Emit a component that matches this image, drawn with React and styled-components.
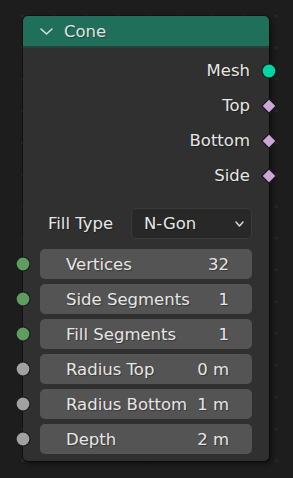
import React from "react";
import styled, { createGlobalStyle } from "styled-components";

//-----------------------------------------------------------------------------------------------

const GlobalStyle = createGlobalStyle`
	html, body {
		margin: 0;
		padding: 0;
		width: 293px;
		height: 478px;
		overflow: hidden;
	}
	body {
		background-color: #1d1d1d;
		background-image: radial-gradient(circle, #2d2d2d 1px, transparent 1.6px);
		background-size: 31.75px 31.75px;
		background-position: 260.6px 0.1px;
		font-family: "DejaVu Sans", "Liberation Sans", sans-serif;
	}
`;

const Canvas = styled.div`
	padding: 16px 0 0 23px;
`;

const Node = styled.div`
	position: relative;
	width: 246px;
	height: 445px;
	box-sizing: border-box;
	background: #303030;
	border-radius: 5px;
	box-shadow: 3px 3px 5px rgba(0, 0, 0, 0.45), 0 0 0 1px rgba(0, 0, 0, 0.35);
	display: flex;
	flex-direction: column;
`;

const Header = styled.div`
	height: 30px;
	background: #1f6f5b;
	border-radius: 5px 5px 0 0;
	border-bottom: 2px solid #24413a;
	display: flex;
	align-items: center;
	padding-left: 17px;
	gap: 11px;
	color: #e2e2e2;
	font-size: 16.5px;
	text-shadow: 1px 1px 1px rgba(0, 0, 0, 0.35);
`;

const Body = styled.div`
	padding: 5px 17px 7px 17px;
	display: flex;
	flex-direction: column;
`;

const OutputRow = styled.div`
	position: relative;
	height: 35px;
	display: flex;
	align-items: center;
	justify-content: flex-end;
	padding-right: 2px;
	color: #e6e6e6;
	font-size: 16.5px;
	text-shadow: 1px 1px 1px rgba(0, 0, 0, 0.4);
`;

const SelectRow = styled.div`
	margin-top: 15px;
	height: 31px;
	display: flex;
	align-items: center;
	color: #e6e6e6;
	font-size: 16.5px;
	text-shadow: 1px 1px 1px rgba(0, 0, 0, 0.4);
`;

const SelectLabel = styled.span`
	padding-left: 8px;
	width: 83px;
`;

const Select = styled.div`
	flex: 1;
	height: 31px;
	box-sizing: border-box;
	background: #282828;
	border: 1px solid #3b3b3b;
	border-radius: 5px;
	display: flex;
	align-items: center;
	justify-content: space-between;
	padding: 0 7px 0 12px;
`;

const Fields = styled.div`
	margin-top: 10px;
	display: flex;
	flex-direction: column;
	gap: 5px;
`;

const FieldRow = styled.div`
	position: relative;
	height: 30px;
`;

const Field = styled.div`
	height: 100%;
	background: #545454;
	border-radius: 5px;
	display: flex;
	align-items: center;
	justify-content: space-between;
	padding: 0 23px 0 26px;
	color: #e6e6e6;
	font-size: 16.5px;
	text-shadow: 1px 1px 1px rgba(0, 0, 0, 0.35);
`;

// sockets sit on the node edge, half over it
const SocketIcon = styled.svg`
	position: absolute;
	top: 50%;
	margin-top: -8px;
	${(p) => (p.$side === "left" ? "left: -25px;" : "right: -24.5px;")}
`;

const Socket = ({ side, color, shape }) => (
	<SocketIcon $side={side} width="16" height="16" viewBox="0 0 16 16">
		{shape === "diamond" ? (
			<polygon
				points="8,0.8 15.2,8 8,15.2 0.8,8"
				fill={color}
				stroke="#1a1a1a"
				strokeWidth="1.2"
			/>
		) : (
			<circle cx="8" cy="8" r="7" fill={color} stroke="#1a1a1a" strokeWidth="1.2" />
		)}
	</SocketIcon>
);

//-----------------------------------------------------------------------------------------------

const Chevron = ({ w = 13, h = 7, color = "#dedede", sw = 1.5 }) => (
	<svg width={w} height={h} viewBox={`0 0 ${w} ${h}`}>
		<polyline
			points={`1,1 ${w / 2},${h - 1} ${w - 1},1`}
			fill="none"
			stroke={color}
			strokeWidth={sw}
			strokeLinecap="round"
			strokeLinejoin="round"
		/>
	</svg>
);

const outputs = [
	{ name: "Mesh", shape: "circle", color: "#00d6a3" },
	{ name: "Top", shape: "diamond", color: "#cca6d6" },
	{ name: "Bottom", shape: "diamond", color: "#cca6d6" },
	{ name: "Side", shape: "diamond", color: "#cca6d6" },
];

const inputs = [
	{ name: "Vertices", value: "32", color: "#5f9c5f" },
	{ name: "Side Segments", value: "1", color: "#5f9c5f" },
	{ name: "Fill Segments", value: "1", color: "#5f9c5f" },
	{ name: "Radius Top", value: "0 m", color: "#a1a1a1" },
	{ name: "Radius Bottom", value: "1 m", color: "#a1a1a1" },
	{ name: "Depth", value: "2 m", color: "#a1a1a1" },
];

export default function App() {
	return (
		<>
			<GlobalStyle />
			<Canvas>
				<Node>
					<Header>
						<Chevron />
						<span>Cone</span>
					</Header>
					<Body>
						{outputs.map((item) => (
							<OutputRow key={item.name}>
								{item.name}
								<Socket side="right" color={item.color} shape={item.shape} />
							</OutputRow>
						))}

						<SelectRow>
							<SelectLabel>Fill Type</SelectLabel>
							<Select>
								<span>N-Gon</span>
								<Chevron w={9} h={6} sw={1.4} />
							</Select>
						</SelectRow>

						<Fields>
							{inputs.map((item) => (
								<FieldRow key={item.name}>
									<Socket side="left" color={item.color} />
									<Field>
										<span>{item.name}</span>
										<span>{item.value}</span>
									</Field>
								</FieldRow>
							))}
						</Fields>
					</Body>
				</Node>
			</Canvas>
		</>
	);
}
